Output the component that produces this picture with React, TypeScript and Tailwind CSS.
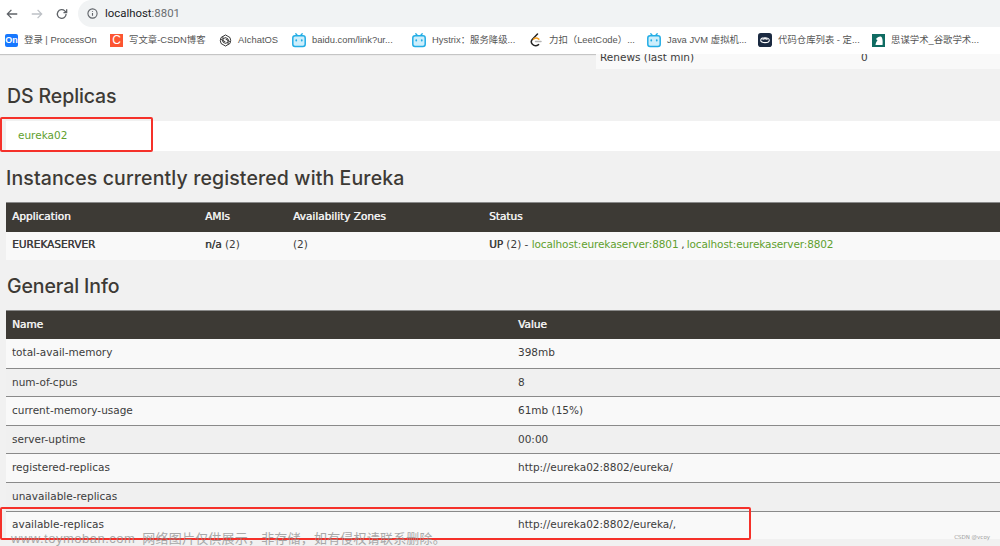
import React from "react";

const Bili = () => (
  <svg width="14" height="15" viewBox="0 0 14 15" className="shrink-0">
    <path d="M3.8 0.8 L5.6 2.8 M10.2 0.8 L8.4 2.8" stroke="#23ade5" strokeWidth="1.3" strokeLinecap="round" />
    <rect x="0.8" y="2.8" width="12.4" height="10.6" rx="2.2" fill="#cdeefb" stroke="#23ade5" strokeWidth="1.5" />
    <rect x="3.4" y="6.2" width="1.7" height="2.4" rx="0.8" fill="#23ade5" />
    <rect x="8.9" y="6.2" width="1.7" height="2.4" rx="0.8" fill="#23ade5" />
  </svg>
);
const Pon = () => (
  <span className="w-[13px] h-[13px] shrink-0 rounded-[2px] bg-[#1677ff] text-white text-[9px] leading-[13px] text-center font-semibold">On</span>
);
const Csdn = () => (
  <span className="w-[13px] h-[13px] shrink-0 bg-[#fc5531] text-white text-[12px] leading-[13px] text-center">C</span>
);
const Openai = () => (
  <svg width="13" height="13" viewBox="0 0 14 14" className="shrink-0" fill="none" stroke="#2a2a2a" strokeWidth="1">
    <path d="M7 1 L11.8 3.8 L12.6 7 L11.8 10.2 L7 13 L2.2 10.2 L1.4 7 L2.2 3.8 Z" />
    <path d="M4.2 2.6 V8.6 L7 10.2 L9.8 8.6 M9.8 11.4 V5.4 L7 3.8 L4.2 5.4 M1.8 5.6 L7 8.6 M12.2 8.4 L7 5.4" />
  </svg>
);
const Leet = () => (
  <svg width="13" height="15" viewBox="0 0 13 15" className="shrink-0" fill="none" strokeWidth="1.5" strokeLinecap="round">
    <path d="M7.5 1 L2.2 6.5 C1 8 1.2 10 2.4 11.2 C4 12.8 6.5 13 8.6 11.6" stroke="#222" />
    <path d="M3.5 6.2 C5 4.8 7 4.8 8.8 6.2" stroke="#f89f1b" />
    <path d="M5.5 8.6 H11" stroke="#b3b3b3" />
  </svg>
);
const Gitee = () => (
  <svg width="14" height="14" viewBox="0 0 15 15" className="shrink-0">
    <rect width="15" height="15" rx="3" fill="#1b2a41" />
    <ellipse cx="7.5" cy="7.7" rx="4.6" ry="2.6" fill="none" stroke="#fff" strokeWidth="1.1" />
    <path d="M4.8 6.8 C6.5 5.8 8.5 5.8 10.2 6.8" stroke="#fff" strokeWidth="1.4" fill="none" />
  </svg>
);
const Sm = () => (
  <svg width="13" height="13" viewBox="0 0 13 13" className="shrink-0">
    <rect width="13" height="13" fill="#0f6b62" />
    <path d="M3.5 11 C3.8 8.5 4.5 7.5 5.5 6.5 L4 5 C5.5 3 8 2 9.5 3 C10.5 4 11 8 10.5 11 Z" fill="#fff" />
  </svg>
);

const marks: [React.ReactNode, string, string][] = [
  [<Pon />, "登录 | ProcessOn", "w-[105px]"],
  [<Csdn />, "写文章-CSDN博客", "w-[109px]"],
  [<Openai />, "AIchatOS", "w-[73px]"],
  [<Bili />, "baidu.com/link?ur...", "w-[120px]"],
  [<Bili />, "Hystrix：服务降级...", "w-[118px]"],
  [<Leet />, "力扣（LeetCode）...", "w-[117px]"],
  [<Bili />, "Java JVM 虚拟机...", "w-[111px]"],
  [<Gitee />, "代码仓库列表 - 定...", "w-[114px]"],
  [<Sm />, "思谋学术_谷歌学术...", "w-[120px]"],
];

const head = "font-['Inter','Liberation_Sans',sans-serif] font-medium text-[#3d3a35] text-[19.5px] leading-[26px]";
const body = "font-['DejaVu_Sans','Noto_Sans_CJK_SC',sans-serif]";
const semi = "[text-shadow:0.4px_0_0_currentColor]";

const Row = ({ name, value, odd, first }: { name: string; value: string; odd: boolean; first?: boolean }) => (
  <div className={`flex h-[28.6px] items-center text-[10.5px] text-[#3c3c3c] ${first ? "" : "border-t border-[#8a8a8a]"} ${odd ? "bg-[#f9f9f9]" : "bg-[#f0f0f0]"}`}>
    <div className="w-[506px] pl-[6px]">{name}</div>
    <div className="pl-[6px]">{value}</div>
  </div>
);

export default function App() {
  return (
    <div className={`w-[1000px] h-[546px] overflow-hidden relative bg-[#f1f1f1] ${body}`}>
      <div className="h-[27px] bg-[#ffffff] flex items-center">
        <div className="flex items-center w-[78px] pl-[5px] gap-[11px]">
          <svg width="14" height="14" viewBox="0 0 24 24" fill="none" stroke="#5f6368" strokeWidth="2.2"><path d="M21 12H4M11 5l-7 7 7 7" /></svg>
          <svg width="14" height="14" viewBox="0 0 24 24" fill="none" stroke="#bdc1c6" strokeWidth="2.2"><path d="M3 12h17M13 5l7 7-7 7" /></svg>
          <svg width="14" height="14" viewBox="0 0 24 24" fill="none" stroke="#5f6368" strokeWidth="2.2"><path d="M19 12a7.5 7.5 0 1 1-2.2-5.3L20 9.5M20 4v5.5h-5.5" /></svg>
        </div>
        <div className="flex-1 h-[27px] bg-[#f1f3f4] rounded-l-[14px] flex items-center pl-[9px] gap-[7px] font-['Roboto',sans-serif] text-[11.4px] text-[#202124]">
          <svg width="11" height="11" viewBox="0 0 24 24" fill="none" stroke="#5f6368" strokeWidth="2.4"><circle cx="12" cy="12" r="10" /><path d="M12 11v6M12 7v1.6" /></svg>
          <span>localhost<span className="text-[#6a6d70]">:8801</span></span>
        </div>
      </div>
      <div className="h-[27px] bg-white flex items-center pl-[5px] shadow-[0_1px_1px_rgba(0,0,0,0.18)] relative font-['Liberation_Sans','Noto_Sans_CJK_SC',sans-serif] text-[9.4px] text-[#555555]">
        {marks.map(([icon, label, w], i) => (
          <div key={i} className={`flex items-center gap-[6px] shrink-0 whitespace-nowrap ${w}`}>
            {icon}
            <span>{label}</span>
          </div>
        ))}
      </div>

      <div className="absolute right-0 top-[54px] w-[404px] h-[15px] bg-[#f9f9f9] overflow-hidden text-[10.5px] text-[#3c3c3c]">
        <div className="flex -mt-[4px] pl-[4px]">
          <span className="w-[261px]">Renews (last min)</span>
          <span>0</span>
        </div>
      </div>

      <div className="px-[6px] pt-[29px]">
        <h1 className={`${head} tracking-[-0.1px] ml-[1px]`}>DS Replicas</h1>
      </div>
      <div className="h-[30px] bg-white mt-[12px] ml-[6px] flex items-center pl-[12px] text-[10.5px] text-[#5fa02e]">eureka02</div>

      <div className="px-[6px] mt-[14px]">
        <h1 className={`${head} tracking-[0.12px]`}>Instances currently registered with Eureka</h1>
      </div>
      <div className="ml-[6px] mt-[11px] text-[10.5px]">
        <div className={`flex h-[30px] pb-[2px] items-center bg-[#3d3a35] border-t border-[#8a8a8a] text-[#f0f0f0] ${semi}`}>
          <div className="w-[193px] pl-[6px]">Application</div>
          <div className="w-[88px] pl-[6px]">AMIs</div>
          <div className="w-[196px] pl-[6px]">Availability Zones</div>
          <div className="pl-[6px]">Status</div>
        </div>
        <div className="flex h-[28px] pb-[2px] items-center bg-[#f9f9f9] text-[#3c3c3c]">
          <div className={`w-[193px] pl-[6px] ${semi}`}>EUREKASERVER</div>
          <div className="w-[88px] pl-[6px]"><span className={semi}>n/a</span> (2)</div>
          <div className="w-[196px] pl-[6px]">(2)</div>
          <div className="pl-[6px]">
            <span className={semi}>UP</span> (2) - <span className="text-[#5fa02e] tracking-[-0.12px]">localhost:eurekaserver:8801</span><span className="tracking-[-0.6px]"> , </span><span className="text-[#5fa02e] tracking-[-0.12px]">localhost:eurekaserver:8802</span>
          </div>
        </div>
      </div>

      <div className="px-[6px] mt-[13px]">
        <h1 className={`${head} tracking-[-0.1px] ml-[1px]`}>General Info</h1>
      </div>
      <div className="ml-[6px] mt-[11px]">
        <div className={`flex h-[29px] items-center bg-[#3d3a35] border-t border-[#8a8a8a] text-[10.5px] text-[#f0f0f0] ${semi}`}>
          <div className="w-[506px] pl-[6px]">Name</div>
          <div className="pl-[6px]">Value</div>
        </div>
        <Row name="total-avail-memory" value="398mb" odd first />
        <Row name="num-of-cpus" value="8" odd={false} />
        <Row name="current-memory-usage" value="61mb (15%)" odd />
        <Row name="server-uptime" value="00:00" odd={false} />
        <Row name="registered-replicas" value="http://eureka02:8802/eureka/" odd />
        <Row name="unavailable-replicas" value="" odd={false} />
        <Row name="available-replicas" value="http://eureka02:8802/eureka/," odd />
      </div>

      <div className="absolute left-0 top-[117px] w-[153px] h-[35px] border-2 border-[#f5312a] rounded-[2px]" />
      <div className="absolute left-0 top-[507px] w-[751px] h-[33px] border-2 border-[#f5312a] rounded-[2px]" />
      <div className="absolute left-[11px] top-[529px] text-[13px] text-[#8f8f8f] opacity-75 whitespace-nowrap font-['Liberation_Sans','Noto_Sans_CJK_SC',sans-serif]">
        <span className="tracking-[0.5px]">www.toymoban.com</span>
        <span className="ml-[7px] tracking-[0.2px]">网络图片仅供展示，非存储，如有侵权请联系删除。</span>
      </div>
      <div className="absolute right-[10px] top-[533px] text-[5.5px] text-[#a0a0a0]">CSDN @vcoy</div>
    </div>
  );
}
